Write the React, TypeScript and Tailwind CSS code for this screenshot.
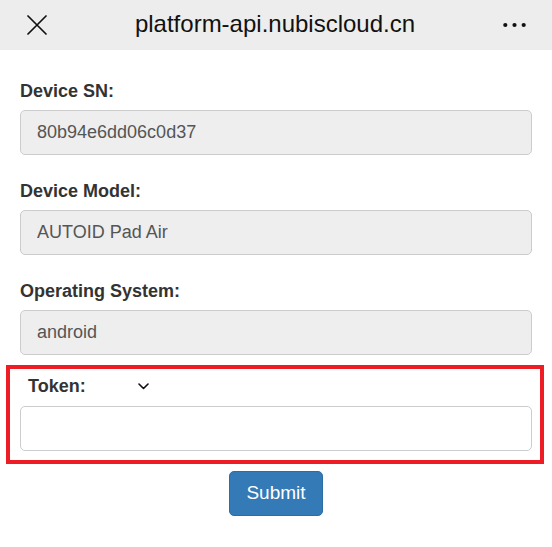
import React from 'react';

const fields = [
  { label: 'Device SN:', value: '80b94e6dd06c0d37' },
  { label: 'Device Model:', value: 'AUTOID Pad Air' },
  { label: 'Operating System:', value: 'android' },
];

const App: React.FC = () => {
  return (
    <div className="min-h-[547px] w-[552px] bg-white font-['Liberation_Sans',Arial,sans-serif] text-[#333]">
      {/* Top bar */}
      <div className="flex h-[50px] items-center justify-between bg-[#ededed] px-[27px] pr-[26px]">
        <svg width="20" height="20" viewBox="0 0 20 20" className="text-[#111]">
          <path d="M1 1 L19 19 M19 1 L1 19" stroke="currentColor" strokeWidth="1.7" strokeLinecap="round" />
        </svg>
        <span className="text-[24px] leading-none text-[#111] pb-[2px]">platform-api.nubiscloud.cn</span>
        <svg width="23" height="6" viewBox="0 0 23 6" className="text-[#111]">
          <circle cx="2.3" cy="3" r="2.1" fill="currentColor" />
          <circle cx="11.5" cy="3" r="2.1" fill="currentColor" />
          <circle cx="20.7" cy="3" r="2.1" fill="currentColor" />
        </svg>
      </div>

      <form className="px-[20px] pt-[28px]" onSubmit={(e) => e.preventDefault()}>
        {fields.map((f, i) => (
          <div key={f.label} className={i === 2 ? 'mb-[10px]' : 'mb-[23px]'}>
            <label className="mb-[6px] block text-[18px] font-bold leading-[26px]">{f.label}</label>
            <input
              readOnly
              value={f.value}
              className="block h-[45px] w-full rounded-[5px] border border-[#ccc] bg-[#eeeeee] px-[16px] text-[18px] text-[#555] outline-none"
            />
          </div>
        ))}

        {/* Highlighted token group */}
        <div className="-ml-[14px] -mr-[12px] border-[4px] border-[#ee1c25] pb-[9px] pl-[10px] pr-[8px] pt-[4px]">
          <div className="mb-[7px] flex h-[26px] items-center">
            <label className="ml-[8px] w-[110px] text-[18px] font-bold leading-[26px]">Token:</label>
            <svg width="11" height="7" viewBox="0 0 11 7" className="mt-[1px] text-[#111]">
              <path d="M1 1 L5.5 5.5 L10 1" fill="none" stroke="currentColor" strokeWidth="1.6" strokeLinecap="round" strokeLinejoin="round" />
            </svg>
          </div>
          <input className="block h-[45px] w-full rounded-[5px] border border-[#ccc] bg-white px-[16px] text-[18px] text-[#555] outline-none" />
        </div>

        <div className="flex justify-center pt-[7px]">
          <button
            type="submit"
            className="h-[45px] w-[94px] rounded-[5px] border border-[#2e6da4] bg-[#337ab7] text-[19px] text-white"
          >
            Submit
          </button>
        </div>
      </form>
    </div>
  );
};

export default App;
